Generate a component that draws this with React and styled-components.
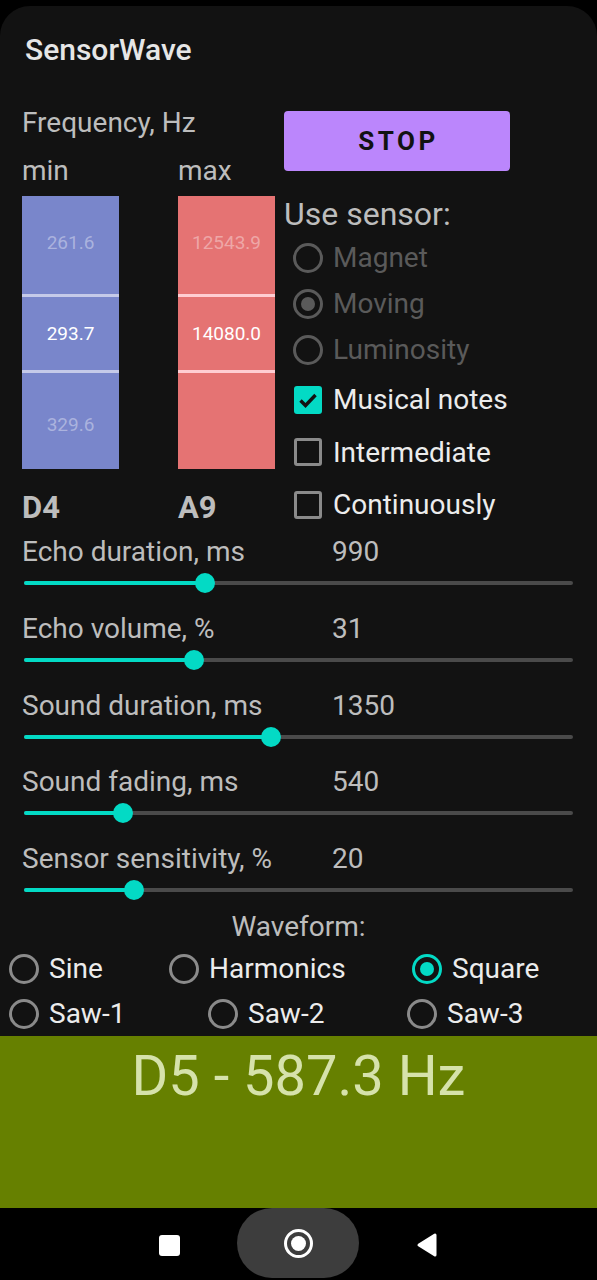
import React from 'react';
import styled, { createGlobalStyle } from 'styled-components';

const GlobalStyle = createGlobalStyle`
	body {
		margin: 0;
		background: #000;
		font-family: Roboto, 'Liberation Sans', sans-serif;
	}
`;

const sensors = [
	{ label: 'Magnet', checked: false },
	{ label: 'Moving', checked: true },
	{ label: 'Luminosity', checked: false },
];

const options = [
	{ label: 'Musical notes', checked: true },
	{ label: 'Intermediate', checked: false },
	{ label: 'Continuously', checked: false },
];

const sliders = [
	{ label: 'Echo duration, ms', value: 990, max: 3000 },
	{ label: 'Echo volume, %', value: 31, max: 100 },
	{ label: 'Sound duration, ms', value: 1350, max: 3000 },
	{ label: 'Sound fading, ms', value: 540, max: 3000 },
	{ label: 'Sensor sensitivity, %', value: 20, max: 100 },
];

const waveRows = [
	{ cols: '160px 243px 1fr', items: ['Sine', 'Harmonics', 'Square'] },
	{ cols: '199px 199px 1fr', items: ['Saw-1', 'Saw-2', 'Saw-3'] },
];

const App = () => {
	return (
		<>
			<GlobalStyle />
			<Screen>
				<Card>
					<Title>SensorWave</Title>
					<Top>
						<LeftCol>
							<Label>Frequency, Hz</Label>
							<MinMax>
								<span>min</span>
								<span>max</span>
							</MinMax>
							<Columns>
								<NumberColumn tone='blue' values={['261.6', '293.7', '329.6']} />
								<NumberColumn tone='red' values={['12543.9', '14080.0', '']} />
							</Columns>
							<Notes>
								<span>D4</span>
								<span>A9</span>
							</Notes>
						</LeftCol>
						<RightCol>
							<StopButton>STOP</StopButton>
							<SensorTitle>Use sensor:</SensorTitle>
							<SensorGroup>
								{sensors.map((s) => (
									<SensorRow key={s.label}>
										<Radio checked={s.checked} disabled />
										<SensorText>{s.label}</SensorText>
									</SensorRow>
								))}
							</SensorGroup>
							<OptionGroup>
								{options.map((o) => (
									<CheckRow key={o.label}>
										<Checkbox checked={o.checked}>
											{o.checked && (
												<svg width='24' height='24' viewBox='0 0 24 24'>
													<polyline
														points='4.5 12.5 9.5 17.5 19.5 7'
														fill='none'
														stroke='#121212'
														strokeWidth='3.4'
													/>
												</svg>
											)}
										</Checkbox>
										<OptionText>{o.label}</OptionText>
									</CheckRow>
								))}
							</OptionGroup>
						</RightCol>
					</Top>
					<SliderList>
						{sliders.map((s) => (
							<SliderBlock key={s.label}>
								<SliderHead>
									<SliderLabel>{s.label}</SliderLabel>
									<SliderValue>{s.value}</SliderValue>
								</SliderHead>
								<Track>
									<Fill style={{ width: `${(s.value / s.max) * 100}%` }}>
										<Thumb />
									</Fill>
								</Track>
							</SliderBlock>
						))}
					</SliderList>
					<WaveTitle>Waveform:</WaveTitle>
					<WaveGroup>
						{waveRows.map((row, i) => (
							<WaveRow key={i} cols={row.cols}>
								{row.items.map((item) => (
									<WaveItem key={item}>
										<Radio checked={item === 'Square'} />
										<WaveText>{item}</WaveText>
									</WaveItem>
								))}
							</WaveRow>
						))}
					</WaveGroup>
				</Card>
				<Readout>D5 - 587.3 Hz</Readout>
				<NavBar>
					<RecentsKey />
					<HomePill>
						<HomeRing>
							<HomeDot />
						</HomeRing>
					</HomePill>
					<svg width='22' height='26' viewBox='0 0 22 26'>
						<polygon
							points='19 3 19 23 3 13'
							fill='#fff'
							stroke='#fff'
							strokeWidth='3'
							strokeLinejoin='round'
						/>
					</svg>
				</NavBar>
			</Screen>
		</>
	);
};

const NumberColumn = ({ tone, values }) => {
	return (
		<Column tone={tone}>
			<Cell height={98} shift={-6}>
				<Value>{values[0]}</Value>
			</Cell>
			<Divider tone={tone} />
			<Cell height={73}>
				<Value selected>{values[1]}</Value>
			</Cell>
			<Divider tone={tone} />
			<Cell height={96} shift={6}>
				<Value>{values[2]}</Value>
			</Cell>
		</Column>
	);
};

const Screen = styled.div`
	width: 597px;
	height: 1280px;
	display: flex;
	flex-direction: column;
	background: #000;
	overflow: hidden;
`;

const Card = styled.div`
	margin-top: 6px;
	height: 1030px;
	flex: none;
	display: flex;
	flex-direction: column;
	background: #121212;
	border-radius: 30px 30px 0 0;
	overflow: hidden;
`;

const Title = styled.div`
	margin: 27px 0 0 25px;
	font-size: 30px;
	line-height: 34px;
	font-weight: 500;
	color: #e6e6e6;
`;

const Top = styled.div`
	display: flex;
	height: 464px;
`;

const LeftCol = styled.div`
	margin-left: 22px;
	width: 253px;
	display: flex;
	flex-direction: column;
`;

const Label = styled.div`
	margin-top: 39px;
	font-size: 28px;
	line-height: 34px;
	color: #bdbdbd;
`;

const MinMax = styled.div`
	margin-top: 14px;
	display: grid;
	grid-template-columns: 156px 1fr;
	font-size: 28px;
	line-height: 34px;
	color: #bdbdbd;
`;

const Columns = styled.div`
	margin-top: 8px;
	display: flex;
	gap: 59px;
`;

const Column = styled.div`
	width: 97px;
	height: 273px;
	display: flex;
	flex-direction: column;
	background: ${(p) => (p.tone === 'blue' ? '#7986cb' : '#e57373')};
`;

const Cell = styled.div`
	height: ${(p) => p.height}px;
	box-sizing: border-box;
	padding-top: ${(p) => Math.max(p.shift || 0, 0)}px;
	padding-bottom: ${(p) => Math.max(-(p.shift || 0), 0)}px;
	display: flex;
	align-items: center;
	justify-content: center;
`;

const Divider = styled.div`
	height: 3px;
	background: ${(p) => (p.tone === 'blue' ? '#c5cae9' : '#ffcdd2')};
`;

const Value = styled.span`
	font-size: 19px;
	color: ${(p) => (p.selected ? '#ffffff' : 'rgba(255, 255, 255, 0.38)')};
`;

const Notes = styled.div`
	margin-top: 21px;
	display: grid;
	grid-template-columns: 156px 1fr;
	font-size: 31px;
	line-height: 36px;
	font-weight: 700;
	color: #bdbdbd;
`;

const RightCol = styled.div`
	margin-left: 9px;
	display: flex;
	flex-direction: column;
`;

const StopButton = styled.button`
	margin-top: 44px;
	width: 226px;
	height: 60px;
	border: none;
	border-radius: 4px;
	background: #bb86fc;
	color: #121212;
	font-family: Roboto, 'Liberation Sans', sans-serif;
	font-size: 26px;
	font-weight: 700;
	letter-spacing: 3.5px;
	text-indent: 3px;
`;

const SensorTitle = styled.div`
	margin-top: 24px;
	font-size: 32px;
	line-height: 38px;
	color: #bdbdbd;
`;

const SensorGroup = styled.div`
	margin-top: 2px;
	display: flex;
	flex-direction: column;
`;

const SensorRow = styled.div`
	height: 46px;
	padding-left: 9px;
	display: flex;
	align-items: center;
	gap: 10px;
`;

const SensorText = styled.span`
	font-size: 28px;
	color: #5a5a5a;
`;

const Radio = styled.span`
	width: 30px;
	height: 30px;
	box-sizing: border-box;
	flex: none;
	border-radius: 50%;
	border: 3px solid
		${(p) => (p.disabled ? '#5a5a5a' : p.checked ? '#03dac5' : '#8a8a8a')};
	display: flex;
	align-items: center;
	justify-content: center;
	&::after {
		content: '';
		width: 14px;
		height: 14px;
		border-radius: 50%;
		background: ${(p) => (p.disabled ? '#5a5a5a' : '#03dac5')};
		display: ${(p) => (p.checked ? 'block' : 'none')};
	}
`;

const OptionGroup = styled.div`
	margin-top: 1px;
	display: flex;
	flex-direction: column;
`;

const CheckRow = styled.div`
	height: 52.5px;
	padding-left: 10px;
	display: flex;
	align-items: center;
	gap: 11px;
`;

const Checkbox = styled.span`
	width: 28px;
	height: 28px;
	box-sizing: border-box;
	flex: none;
	border-radius: 3px;
	border: ${(p) => (p.checked ? 'none' : '3px solid #8a8a8a')};
	background: ${(p) => (p.checked ? '#03dac5' : 'transparent')};
	display: flex;
	align-items: center;
	justify-content: center;
`;

const OptionText = styled.span`
	font-size: 28px;
	color: #ececec;
`;

const SliderList = styled.div`
	margin-top: 4px;
	display: flex;
	flex-direction: column;
	gap: 16.75px;
`;

const SliderBlock = styled.div`
	height: 60px;
	display: flex;
	flex-direction: column;
`;

const SliderHead = styled.div`
	padding-left: 22px;
	display: flex;
	font-size: 28px;
	line-height: 34px;
	color: #bdbdbd;
`;

const SliderLabel = styled.span`
	width: 310px;
`;

const SliderValue = styled.span``;

const Track = styled.div`
	margin: 12px 24px 0;
	height: 4px;
	background: #4a4a4a;
	border-radius: 2px;
	display: flex;
	align-items: center;
`;

const Fill = styled.div`
	position: relative;
	height: 4px;
	background: #03dac5;
	border-radius: 2px;
`;

const Thumb = styled.span`
	position: absolute;
	right: -10px;
	top: -8px;
	width: 20px;
	height: 20px;
	border-radius: 50%;
	background: #03dac5;
`;

const WaveTitle = styled.div`
	margin-top: 8px;
	text-align: center;
	font-size: 28px;
	line-height: 34px;
	color: #bdbdbd;
`;

const WaveGroup = styled.div`
	margin-top: 2px;
	display: flex;
	flex-direction: column;
`;

const WaveRow = styled.div`
	height: 45px;
	padding-left: 9px;
	display: grid;
	grid-template-columns: ${(p) => p.cols};
`;

const WaveItem = styled.div`
	display: flex;
	align-items: center;
	gap: 10px;
`;

const WaveText = styled.span`
	font-size: 28px;
	color: #ececec;
`;

const Readout = styled.div`
	height: 172px;
	flex: none;
	box-sizing: border-box;
	padding-top: 8px;
	background: #668000;
	color: #d6e2ab;
	text-align: center;
	font-size: 56px;
	line-height: 64px;
`;

const NavBar = styled.div`
	height: 72px;
	flex: none;
	display: flex;
	justify-content: center;
	align-items: center;
	gap: 57px;
	background: #000;
	& > svg {
		margin-top: 2px;
	}
`;

const RecentsKey = styled.span`
	width: 21px;
	height: 21px;
	margin-top: 2px;
	border-radius: 3px;
	background: #fff;
`;

const HomePill = styled.div`
	width: 122px;
	height: 70px;
	margin-top: -2px;
	border-radius: 35px;
	background: #3d3d3d;
	display: flex;
	align-items: center;
	justify-content: center;
`;

const HomeRing = styled.span`
	width: 29px;
	height: 29px;
	box-sizing: border-box;
	border-radius: 50%;
	border: 3px solid #fff;
	display: flex;
	align-items: center;
	justify-content: center;
`;

const HomeDot = styled.span`
	width: 15px;
	height: 15px;
	border-radius: 50%;
	background: #fff;
`;

export default App;
